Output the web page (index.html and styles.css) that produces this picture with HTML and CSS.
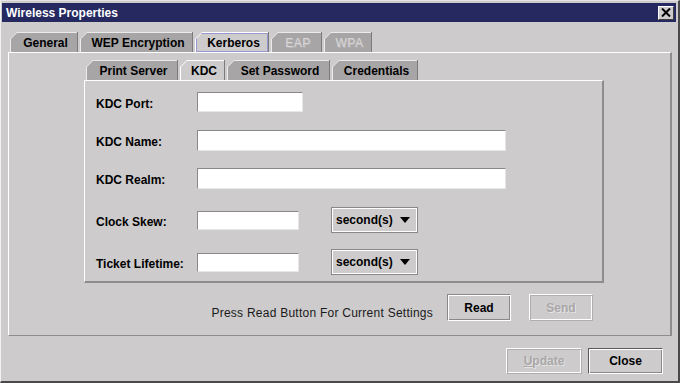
FILE: index.html
```html
<!DOCTYPE html>
<html lang="en">
<head>
    <meta charset="UTF-8">
    <title>Wireless Properties</title>
    <link rel="stylesheet" href="styles.css">
</head>
<body>
    <div class="window">
        <div class="titlebar">
            <span class="title">Wireless Properties</span>
            <span class="close-box">
                <svg width="10" height="9" viewBox="0 0 10 9">
                    <path d="M1 0.5 L9 8.5 M9 0.5 L1 8.5" stroke="#000" stroke-width="2"/>
                </svg>
            </span>
        </div>

        <div class="tabs outer-tabs">
            <div class="tab w-general"><div class="tab-face">General</div></div>
            <div class="tab w-wep"><div class="tab-face">WEP Encryption</div></div>
            <div class="tab tab-selected w-kerberos"><div class="tab-face focused">Kerberos</div></div>
            <div class="tab w-eap"><div class="tab-face disabled">EAP</div></div>
            <div class="tab w-wpa"><div class="tab-face disabled">WPA</div></div>
        </div>

        <div class="outer-panel">
            <div class="tabs inner-tabs">
                <div class="tab w-print"><div class="tab-face">Print Server</div></div>
                <div class="tab tab-selected w-kdc"><div class="tab-face">KDC</div></div>
                <div class="tab w-setpw"><div class="tab-face">Set Password</div></div>
                <div class="tab w-cred"><div class="tab-face">Credentials</div></div>
            </div>

            <div class="inner-panel">
                <div class="field-row">
                    <label class="field-label">KDC Port:</label>
                    <div class="text-box box-port"></div>
                </div>
                <div class="field-row">
                    <label class="field-label">KDC Name:</label>
                    <div class="text-box box-long"></div>
                </div>
                <div class="field-row">
                    <label class="field-label">KDC Realm:</label>
                    <div class="text-box box-long"></div>
                </div>
                <div class="field-row spaced">
                    <label class="field-label">Clock Skew:</label>
                    <div class="text-box box-short"></div>
                    <div class="combo">second(s) <span class="arrow"></span></div>
                </div>
                <div class="field-row spaced">
                    <label class="field-label">Ticket Lifetime:</label>
                    <div class="text-box box-short"></div>
                    <div class="combo">second(s) <span class="arrow"></span></div>
                </div>
            </div>

            <div class="read-row">
                <span class="hint">Press Read Button For Current Settings</span>
                <button class="btn btn-read">Read</button>
                <button class="btn btn-send" disabled>Send</button>
            </div>
        </div>

        <div class="dialog-buttons">
            <button class="btn btn-update" disabled><u>U</u>pdate</button>
            <button class="btn btn-close">Close</button>
        </div>
    </div>
</body>
</html>
```

FILE: styles.css
```css
body {
    margin: 0;
    font-family: "Liberation Sans", Arial, sans-serif;
    font-size: 12px;
    background-color: #cdcbcc;
}

.window {
    width: 680px;
    height: 383px;
    box-sizing: border-box;
    background-color: #cdcbcc;
    border-top: 1px solid #e4e4e4;
    border-left: 1px solid #f2f2f2;
    border-right: 2px solid #4a4a4a;
    border-bottom: 2px solid #4a4a4a;
    padding: 2px 2px 0 1px;
    display: flex;
    flex-direction: column;
}

.titlebar {
    height: 19px;
    background-color: #25295f;
    display: flex;
    align-items: center;
    justify-content: space-between;
    padding: 0 2px 0 4px;
}

.title {
    color: #ffffff;
    font-weight: bold;
    font-size: 12px;
}

.close-box {
    width: 16px;
    height: 14px;
    box-sizing: border-box;
    background-color: #cdcbcc;
    border: 1px solid;
    border-color: #ffffff #404040 #404040 #ffffff;
    display: flex;
    align-items: center;
    justify-content: center;
}

/* tabs */
.tabs {
    display: flex;
    gap: 2px;
    height: 20px;
}

.outer-tabs {
    margin: 10px 0 0 8px;
}

.tab {
    height: 20px;
    box-sizing: border-box;
    padding: 1px 1px 0 1px;
    background: linear-gradient(to left, #7c7a7b 1px, #ebebeb 1px);
    clip-path: polygon(0 7px, 7px 0, 100% 0, 100% 100%, 0 100%);
}

.tab-face {
    height: 100%;
    box-sizing: border-box;
    background-color: #a7a5a6;
    clip-path: polygon(0 6px, 6px 0, 100% 0, 100% 100%, 0 100%);
    display: flex;
    align-items: center;
    justify-content: center;
    font-weight: bold;
    color: #000000;
    padding-left: 3px;
}

.tab-selected .tab-face {
    background-color: #cdcbcc;
}

.tab-selected {
    background: linear-gradient(to left, #7c7a7b 1px, #ffffff 1px);
}

.focused {
    box-shadow: inset 0 0 0 1px #9898d0;
}

.disabled {
    color: #d9d7d8;
    text-shadow: 1px 1px 0 #b9b7b8;
    font-weight: normal;
    letter-spacing: 0.5px;
}

.w-general { width: 68px; }
.w-wep { width: 113px; }
.w-kerberos { width: 74px; }
.w-eap { width: 51px; }
.w-wpa { width: 48px; }

.w-print { width: 92px; }
.w-kdc { width: 45px; }
.w-setpw { width: 103px; }
.w-cred { width: 86px; }

/* panels */
.outer-panel {
    margin: 0 4px 0 6px;
    height: 284px;
    box-sizing: border-box;
    border-top: 1px solid #ffffff;
    border-left: 1px solid #ffffff;
    border-right: 2px solid #8e8c8d;
    border-bottom: 1px solid #8e8c8d;
    padding-top: 7px;
}

.inner-tabs {
    margin-left: 77px;
}

.inner-panel {
    margin-left: 75px;
    width: 520px;
    height: 203px;
    box-sizing: border-box;
    border-top: 1px solid #ffffff;
    border-left: 1px solid #ffffff;
    border-right: 2px solid #8e8c8d;
    border-bottom: 2px solid #8e8c8d;
    padding: 8px 0 0 11px;
    display: flex;
    flex-direction: column;
    gap: 12px;
}

.field-row {
    height: 26px;
    display: flex;
    align-items: center;
}

.field-row.spaced {
    margin-top: 4px;
}

.field-label {
    width: 101px;
    font-weight: bold;
    padding-top: 4px;
}

.text-box {
    height: 20px;
    box-sizing: border-box;
    background-color: #ffffff;
    border: 1px solid;
    border-color: #8a8889 #e6e6e6 #e6e6e6 #8a8889;
}

.box-port { width: 106px; }
.box-long { width: 309px; height: 21px; }
.box-short { width: 102px; height: 19px; }

.combo {
    margin-left: 32px;
    width: 87px;
    height: 26px;
    box-sizing: border-box;
    border: 1px solid #8a8889;
    box-shadow: inset 1px 1px 0 #ffffff, inset -1px -1px 0 #ffffff;
    display: flex;
    align-items: center;
    padding-left: 4px;
    font-weight: bold;
}

.arrow {
    margin-left: 7px;
    width: 0;
    height: 0;
    border-left: 5px solid transparent;
    border-right: 5px solid transparent;
    border-top: 6px solid #000000;
}

/* buttons */
.read-row {
    margin: 11px 0 0 75px;
    width: 520px;
    box-sizing: border-box;
    padding-right: 11px;
    display: flex;
    justify-content: flex-end;
    align-items: flex-start;
}

.hint {
    margin: 12px 14px 0 0;
    color: #1a1a1a;
    letter-spacing: 0.25px;
}

.btn {
    width: 64px;
    height: 27px;
    padding: 0;
    font-family: "Liberation Sans", Arial, sans-serif;
    font-size: 12px;
    font-weight: bold;
    color: #000000;
    background-color: #cdcbcc;
    border: 1px solid;
    border-color: #8a8889 #ffffff #ffffff #8a8889;
    box-shadow: inset 1px 1px 0 #ffffff, inset -1px -1px 0 #8a8889;
}

.btn:disabled {
    color: #a9a7a8;
    text-shadow: 1px 1px 0 #e4e4e4;
    border-color: #ffffff #b0aeaf #b0aeaf #ffffff;
    box-shadow: inset 1px 1px 0 #b0aeaf, inset -1px -1px 0 #ffffff;
}

.btn-send {
    margin-left: 18px;
}

.dialog-buttons {
    margin: 12px 13px 0 0;
    display: flex;
    justify-content: flex-end;
    gap: 6px;
}

.btn-update {
    width: 76px;
    height: 26px;
}

.btn-close {
    width: 75px;
    height: 26px;
    border-color: #5a5859 #ffffff #ffffff #5a5859;
}
```
